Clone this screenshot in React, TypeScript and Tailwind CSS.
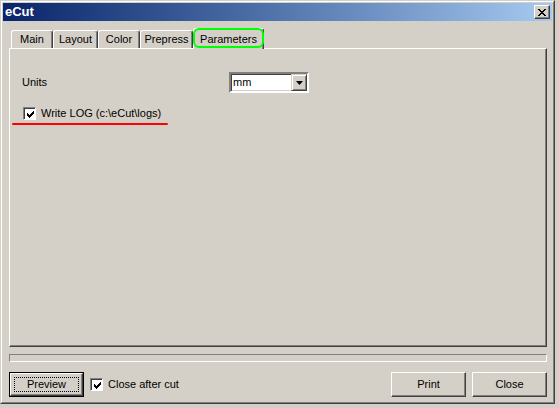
import React from "react";

const font = { fontFamily: '"Liberation Sans", Arial, sans-serif' };

const Tab: React.FC<{ label: string; width: string }> = ({ label, width }) => (
  <div
    className={`${width} mt-[2px] h-[18px] flex items-center justify-center border-t border-l border-r border-t-white border-l-white border-r-[#404040] rounded-t-[3px] shadow-[inset_-1px_0_#808080] text-[11px] text-black`}
  >
    {label}
  </div>
);

// classic 7x7 check glyph, one rect per pixel column run
const checkRuns: [number, number, number][] = [
  [0, 2, 3],
  [1, 3, 3],
  [2, 4, 3],
  [3, 3, 3],
  [4, 2, 3],
  [5, 1, 3],
  [6, 0, 3],
];

const CheckBox: React.FC = () => (
  <div className="w-[13px] h-[13px] bg-white border border-t-[#808080] border-l-[#808080] border-r-white border-b-white shadow-[inset_1px_1px_#404040] flex items-center justify-center">
    <svg width="7" height="7" viewBox="0 0 7 7" shapeRendering="crispEdges" className="ml-[1px] mt-[1px]">
      {checkRuns.map(([x, y, h]) => (
        <rect key={x} x={x} y={y} width="1" height={h} fill="#000" />
      ))}
    </svg>
  </div>
);

const Button: React.FC<{ label: string; isDefault?: boolean; width: string }> = ({ label, isDefault, width }) => (
  <div className={`${width} h-[25px] ${isDefault ? "border border-black" : ""}`}>
    <div className="w-full h-full border border-t-white border-l-white border-r-[#404040] border-b-[#404040] shadow-[inset_-1px_-1px_#808080] flex items-center justify-center p-[3px]">
      <div
        className={`w-full h-full flex items-center justify-center text-[11px] text-black ${
          isDefault ? "border border-dotted border-black" : ""
        }`}
      >
        {label}
      </div>
    </div>
  </div>
);

const App: React.FC = () => {
  return (
    <div className="w-[559px] h-[408px] bg-[#d4d0c8]" style={font}>
      <div className="w-[555px] h-[404px] border border-t-[#d4d0c8] border-l-[#d4d0c8] border-r-[#404040] border-b-[#404040]">
        <div className="w-full h-full border border-t-white border-l-white border-r-[#808080] border-b-[#808080] p-[1px] flex flex-col">
          {/* title bar */}
          <div className="h-[18px] flex items-center justify-between bg-gradient-to-r from-[#0a246a] to-[#a6caf0] pl-[2px] pr-[2px]">
            <span className="text-white font-bold text-[13px]">eCut</span>
            <div className="w-[16px] h-[14px] bg-[#d4d0c8] border border-t-white border-l-white border-r-[#404040] border-b-[#404040] shadow-[inset_-1px_-1px_#808080] flex items-center justify-center">
              <svg width="8" height="7" viewBox="0 0 8 7">
                <path d="M0 0 L7 7 M1 0 L8 7 M7 0 L0 7 M8 0 L1 7" stroke="#000" strokeWidth="1" fill="none" />
              </svg>
            </div>
          </div>

          {/* body */}
          <div className="flex-1 flex flex-col pl-[6px] pr-[5px] pt-[7px]">
            <div className="flex h-[20px] pl-[2px] relative z-10">
              <Tab label="Main" width="w-[42px]" />
              <Tab label="Layout" width="w-[45px]" />
              <Tab label="Color" width="w-[42px]" />
              <Tab label="Prepress" width="w-[53px]" />
              <div className="relative w-[71px] h-[21px] bg-[#d4d0c8] flex items-start justify-center pt-[2px] border-t border-l border-r border-t-white border-l-white border-r-[#404040] rounded-t-[3px] shadow-[inset_-1px_0_#808080] text-[11px] text-black">
                Parameters
                <div className="absolute left-[-1px] top-[-1px] w-[71px] h-[20px] rounded-[6px] border-2 border-[#00ff00]" />
              </div>
            </div>

            {/* panel */}
            <div className="h-[299px] border border-t-white border-l-white border-r-[#404040] border-b-[#404040] shadow-[inset_-1px_-1px_#808080] pl-[12px] pt-[23px]">
              <div className="flex items-center h-[21px]">
                <span className="w-[207px] text-[11px] text-black">Units</span>
                <div className="w-[80px] h-[21px] bg-white border-2 border-t-[#808080] border-l-[#808080] border-r-white border-b-white shadow-[inset_1px_1px_#404040,inset_-1px_-1px_#d4d0c8] flex items-center justify-between">
                  <span className="pl-[2px] text-[11px] text-black">mm</span>
                  <div className="w-[16px] h-[17px] bg-[#d4d0c8] border border-t-[#d4d0c8] border-l-[#d4d0c8] border-r-[#404040] border-b-[#404040] shadow-[inset_1px_1px_white,inset_-1px_-1px_#808080] flex items-center justify-center">
                    <svg width="7" height="4" viewBox="0 0 7 4">
                      <path d="M0 0 H7 L3.5 4 Z" fill="#000" />
                    </svg>
                  </div>
                </div>
              </div>
              <div className="flex items-center h-[13px] mt-[14px] ml-[1px]">
                <CheckBox />
                <span className="ml-[5px] text-[11px] text-black">Write LOG (c:\eCut\logs)</span>
              </div>
              <div className="mt-[3px] ml-[-10px] w-[156px] h-[2px] bg-[#ff0000] rounded-full" />
            </div>

            {/* status bar */}
            <div className="mt-[7px] h-[8px] border border-t-[#808080] border-l-[#808080] border-r-white border-b-white" />

            {/* buttons */}
            <div className="mt-[10px] flex items-center">
              <Button label="Preview" isDefault width="w-[75px]" />
              <div className="ml-[6px] flex items-center">
                <CheckBox />
                <span className="ml-[5px] text-[11px] text-black">Close after cut</span>
              </div>
              <div className="ml-auto flex gap-[6px]">
                <Button label="Print" width="w-[75px]" />
                <Button label="Close" width="w-[75px]" />
              </div>
            </div>
          </div>
        </div>
      </div>
    </div>
  );
};

export default App;
